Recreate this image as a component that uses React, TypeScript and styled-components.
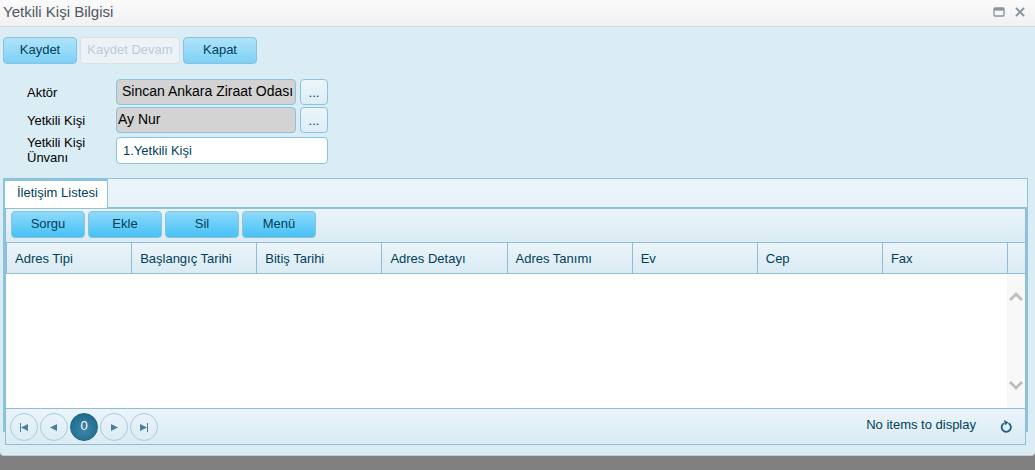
import React from "react";
import styled, { createGlobalStyle, css } from "styled-components";

const line = "#8fbdd2";
const edge = "#8ac3dd";
const ink = "#003f59";
const panelFade = "linear-gradient(#ebf4fa, #daebf3)";

const GlobalStyle = createGlobalStyle`
  * { box-sizing: border-box; }
  body {
    margin: 0;
    background: #808080;
    font-family: "Liberation Sans", Arial, sans-serif;
    font-size: 13px;
    line-height: 15px;
    color: ${ink};
  }
  button, input { font-family: inherit; font-size: 13px; color: inherit; }
`;

const Window = styled.main`
  background: #daecf4;
  border-bottom: 1px solid #c4cdd1;
  border-radius: 0 0 4px 4px;
  padding-bottom: 23px;
`;

const TitleBar = styled.header`
  display: flex;
  align-items: center;
  height: 27px;
  padding: 0 8px 2px 3px;
  background: linear-gradient(#fafafa, #f1f1f1);
  border-bottom: 1px solid #d9d9d9;
`;

const Title = styled.h1`
  flex: 1;
  margin: 0;
  font-size: 15px;
  font-weight: 400;
  line-height: 20px;
  color: #4f5763;
`;

const WindowButton = styled.button`
  display: flex;
  align-items: center;
  justify-content: center;
  width: 14px;
  height: 14px;
  margin-left: 7px;
  padding: 0;
  border: 0;
  background: none;
`;

const Actions = styled.div`
  display: flex;
  gap: 3px;
  padding: 10px 3px 0;
`;

const tones = {
  light: css`background: linear-gradient(#b0e3f9, #7dd1f6);`,
  strong: css`background: linear-gradient(#8edafa, #47c1f6);`,
};

const PushButton = styled.button<{ $tone?: "light" | "strong" }>`
  min-width: 74px;
  height: 27px;
  padding: 0 6px 2px;
  border: 1px solid #8ac0d8;
  border-radius: 4px;
  color: ${ink};
  ${(p) => tones[p.$tone ?? "light"]}

  &:disabled {
    min-width: 100px;
    color: #bfcbd9;
    border-color: #dbe2e6;
    background: #ecf2f6;
  }
`;

const Form = styled.form`
  display: grid;
  grid-template-columns: 89px 212px;
  row-gap: 2px;
  padding: 15px 0 0 27px;
`;

const Label = styled.label`
  align-self: center;
  color: #000;
`;

const Field = styled.div`
  display: flex;
  gap: 4px;
`;

const TextBox = styled.input<{ $indent: number }>`
  flex: 1;
  min-width: 0;
  height: 26px;
  padding: 0 0 2px ${(p) => p.$indent}px;
  border: 1px solid ${edge};
  border-radius: 4px;
  outline: 0;
  background: #fff;

  &:read-only {
    font-size: 14px;
    color: #000;
    background: #d3d3d3;
  }
`;

const TitleField = styled(Field)`
  align-items: center;
  height: 30px;

  input { height: 27px; padding-bottom: 0; }
`;

const PickButton = styled.button`
  width: 28px;
  height: 26px;
  padding: 0;
  border: 1px solid ${edge};
  border-radius: 4px;
  background: linear-gradient(#edf5fa, #ddedf5);
`;

const Tabs = styled.section`
  margin: 13px 7px 0 3px;
  border-top: 1px solid ${edge};
`;

const TabStrip = styled.div`
  display: flex;
  height: 29px;
  border: solid ${edge};
  border-width: 0 1px 1px 2px;
  background: linear-gradient(#ecf3fb, #e7f3f9);
`;

const Tab = styled.button`
  height: 29px;
  padding: 0 9px 4px 12px;
  border: solid ${edge};
  border-width: 2px 1px 0 0;
  background: #fff;
`;

const TabPanel = styled.div`
  height: 224px;
  border: solid ${edge};
  border-width: 0 2px;
`;

const Grid = styled.div`
  border: 1px solid ${line};
  border-top-color: ${edge};
  background: #daecf4;
`;

const Toolbar = styled.div`
  display: flex;
  gap: 3px;
  height: 33px;
  padding: 2px 5px 0;
  background: ${panelFade};
`;

const Table = styled.table`
  width: 100%;
  table-layout: fixed;
  border-collapse: separate;
  border-spacing: 0;
  background: ${panelFade};
`;

const HeadCell = styled.th<{ $gutter?: boolean }>`
  width: ${(p) => (p.$gutter ? "18px" : "auto")};
  height: 32px;
  padding: 0 0 0 8px;
  border: solid ${line};
  border-width: 1px 0 1px 1px;
  font-weight: 400;
  text-align: left;
  white-space: nowrap;
`;

const Rows = styled.div`
  display: flex;
  justify-content: flex-end;
  height: 134px;
  background: #fff;
`;

const Scroller = styled.div`
  display: flex;
  flex-direction: column;
  justify-content: space-between;
  width: 18px;
  padding: 16px 0;
  background: #f8f8f8;
`;

const ScrollButton = styled.button`
  display: flex;
  justify-content: center;
  padding: 0;
  border: 0;
  background: none;
`;

const Pager = styled.footer`
  display: flex;
  align-items: center;
  gap: 2px;
  height: 36px;
  padding: 0 12px 0 4px;
  border-top: 1px solid ${line};
  background: ${panelFade};
`;

const PageButton = styled.button<{ $current?: boolean }>`
  display: flex;
  align-items: center;
  justify-content: center;
  width: 28px;
  height: 28px;
  padding: 0;
  border: 1px solid #a6ccdc;
  border-radius: 50%;
  background: none;
  ${(p) =>
    p.$current &&
    css`
      padding-bottom: 3px;
      border-color: #176486;
      color: #fff;
      background: radial-gradient(circle at 50% 60%, #3f86a5, #14648a);
    `}
`;

const Status = styled.span`
  flex: 1;
  padding: 0 21px 4px 0;
  text-align: right;
`;

const RefreshButton = styled(WindowButton)`
  margin-left: 0;
`;

const columns = [
  "Adres Tipi",
  "Başlangıç Tarihi",
  "Bitiş Tarihi",
  "Adres Detayı",
  "Adres Tanımı",
  "Ev",
  "Cep",
  "Fax",
];

const arrows = {
  first: "M2 2h1v9H2zM10 3v7L3 6.5z",
  previous: "M9 3v7L2 6.5z",
  next: "M3 3v7l7-3.500z",
  last: "M9 2h1v9H9zM2 3v7l7-3.500z",
};

const Arrow = ({ kind }: { kind: keyof typeof arrows }) => (
  <svg width="12" height="12" viewBox="0 0 12 12" fill="#4b8099">
    <path d={arrows[kind]} />
  </svg>
);

const Chevron = ({ down }: { down?: boolean }) => (
  <svg width="14" height="12" viewBox="0 0 14 12" fill="none" stroke="#bebebe" strokeWidth="3">
    <path d={down ? "M1 2l6 6 6-6" : "M1 10l6-6 6 6"} />
  </svg>
);

export default function App() {
  return (
    <>
      <GlobalStyle />
      <Window>
        <TitleBar>
          <Title>Yetkili Kişi Bilgisi</Title>
          <WindowButton aria-label="Büyüt">
            <svg width="12" height="10" viewBox="0 0 12 10" fill="none" stroke="#8b939c">
              <rect x="1" y="1" width="10" height="8" rx="1" strokeWidth="1.3" />
              <path d="M1 2.300h10" strokeWidth="2.6" />
            </svg>
          </WindowButton>
          <WindowButton aria-label="Kapat">
            <svg width="10" height="10" viewBox="0 0 10 10" stroke="#8b939c" strokeWidth="1.9">
              <path d="M1 1l8 8M9 1L1 9" />
            </svg>
          </WindowButton>
        </TitleBar>

        <Actions>
          <PushButton>Kaydet</PushButton>
          <PushButton disabled>Kaydet Devam</PushButton>
          <PushButton>Kapat</PushButton>
        </Actions>

        <Form>
          <Label htmlFor="actor">Aktör</Label>
          <Field>
            <TextBox id="actor" $indent={5} readOnly defaultValue="Sincan Ankara Ziraat Odası" />
            <PickButton type="button">...</PickButton>
          </Field>
          <Label htmlFor="person">Yetkili Kişi</Label>
          <Field>
            <TextBox id="person" $indent={1} readOnly defaultValue="Ay Nur" />
            <PickButton type="button">...</PickButton>
          </Field>
          <Label htmlFor="role">
            Yetkili Kişi
            <br />
            Ünvanı
          </Label>
          <TitleField>
            <TextBox id="role" $indent={6} defaultValue="1.Yetkili Kişi" />
          </TitleField>
        </Form>

        <Tabs>
          <TabStrip role="tablist">
            <Tab role="tab" aria-selected="true">İletişim Listesi</Tab>
          </TabStrip>
          <TabPanel role="tabpanel">
            <Grid>
              <Toolbar>
                {["Sorgu", "Ekle", "Sil", "Menü"].map((name) => (
                  <PushButton key={name} $tone="strong">{name}</PushButton>
                ))}
              </Toolbar>
              <Table>
                <thead>
                  <tr>
                    {columns.map((name) => (
                      <HeadCell key={name}>{name}</HeadCell>
                    ))}
                    <HeadCell $gutter />
                  </tr>
                </thead>
              </Table>
              <Rows>
                <Scroller>
                  <ScrollButton aria-label="Yukarı"><Chevron /></ScrollButton>
                  <ScrollButton aria-label="Aşağı"><Chevron down /></ScrollButton>
                </Scroller>
              </Rows>
              <Pager>
                <PageButton aria-label="İlk"><Arrow kind="first" /></PageButton>
                <PageButton aria-label="Önceki"><Arrow kind="previous" /></PageButton>
                <PageButton $current>0</PageButton>
                <PageButton aria-label="Sonraki"><Arrow kind="next" /></PageButton>
                <PageButton aria-label="Son"><Arrow kind="last" /></PageButton>
                <Status>No items to display</Status>
                <RefreshButton aria-label="Yenile">
                  <svg width="12" height="13" viewBox="0 0 12 13" fill="none" stroke="#1d5f7c" strokeWidth="1.8">
                    <path d="M8.500 3.200A4.600 4.600 0 1 1 4 3.200" />
                    <path d="M4 0L8.500 2.600 5 5.200z" fill="#1d5f7c" stroke="none" />
                  </svg>
                </RefreshButton>
              </Pager>
            </Grid>
          </TabPanel>
        </Tabs>
      </Window>
    </>
  );
}
